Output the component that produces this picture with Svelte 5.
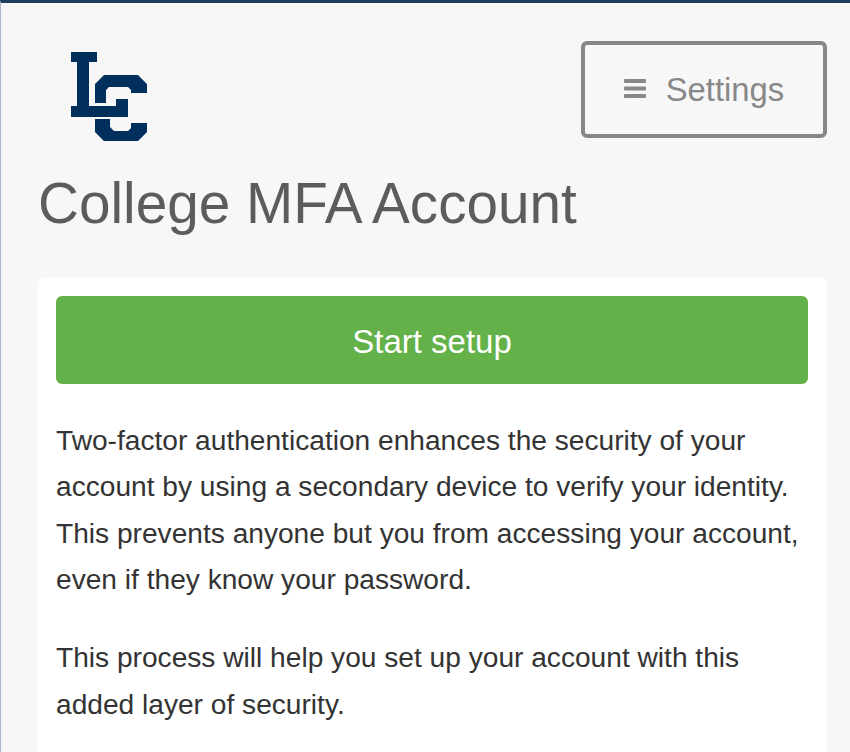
<script>
  let paragraphs = [
    "Two-factor authentication enhances the security of your account by using a secondary device to verify your identity. This prevents anyone but you from accessing your account, even if they know your password.",
    "This process will help you set up your account with this added layer of security."
  ];
</script>

<div class="page">
  <header class="top">
    <div class="logo">
      <svg width="78" height="91" viewBox="71 51 78 91" aria-label="LC">
        <path
          fill="#002f5c"
          d="M71 52H97V62H89V106H116V99H128V117H71V106H77V62H71Z"
        />
        <path
          fill="#002f5c"
          d="M95 84L104 75H138L147 84V93H131V90L128 87H109L106 90V103H95Z"
        />
        <path
          fill="#002f5c"
          d="M95 119H110V127L114 131H128L131 128V123H147V132L138 141H104L95 132Z"
        />
      </svg>
    </div>
    <button class="settings">
      <svg class="bars" width="22" height="19" viewBox="0 0 22 19">
        <rect y="0" width="22" height="4" rx="1" />
        <rect y="7.5" width="22" height="4" rx="1" />
        <rect y="15" width="22" height="4" rx="1" />
      </svg>
      <span>Settings</span>
    </button>
  </header>

  <h1>College MFA Account</h1>

  <section class="card">
    <button class="start">Start setup</button>
    {#each paragraphs as text}
      <p>{text}</p>
    {/each}
  </section>
</div>

<style>
  :global(body) {
    margin: 0;
    background: #f7f7f7;
    overflow: hidden;
  }
  .page {
    height: 752px;
    box-sizing: border-box;
    border-top: 3px solid #1d3f5e;
    border-left: 1px solid #a9b7cc;
    padding: 0 23px 0 37px;
    font-family: "Liberation Sans", Arial, sans-serif;
    overflow: hidden;
    background: #f7f7f7;
  }
  .top {
    display: flex;
    justify-content: space-between;
    align-items: flex-start;
    padding-top: 38px;
  }
  .logo {
    padding: 10px 0 0 33px;
    height: 91px;
  }
  .logo svg {
    display: block;
  }
  .settings {
    width: 246px;
    height: 97px;
    box-sizing: border-box;
    display: flex;
    align-items: center;
    justify-content: center;
    gap: 20px;
    background: transparent;
    border: 4px solid #888888;
    border-radius: 6px;
    color: #888888;
    font: inherit;
    font-size: 32.8px;
    padding: 0;
  }
  .bars {
    fill: #888888;
    margin-top: -3px;
  }
  h1 {
    margin: 0;
    padding-top: 30px;
    font-size: 56.7px;
    line-height: 64px;
    font-weight: 400;
    color: #5c5c5c;
  }
  .card {
    margin-top: 42px;
    padding: 18px 19px 0 18px;
    background: #ffffff;
    border-radius: 6px;
    height: 600px;
    box-sizing: border-box;
  }
  .start {
    display: block;
    width: 100%;
    height: 88px;
    border: 0;
    border-radius: 6px;
    background: #63b148;
    color: #ffffff;
    font: inherit;
    font-size: 33px;
    padding: 3px 0 0;
  }
  p {
    margin: 33.6px 0 0;
    font-size: 28.14px;
    line-height: 46.5px;
    color: #333333;
  }
  p + p {
    margin-top: 31.6px;
  }
</style>
